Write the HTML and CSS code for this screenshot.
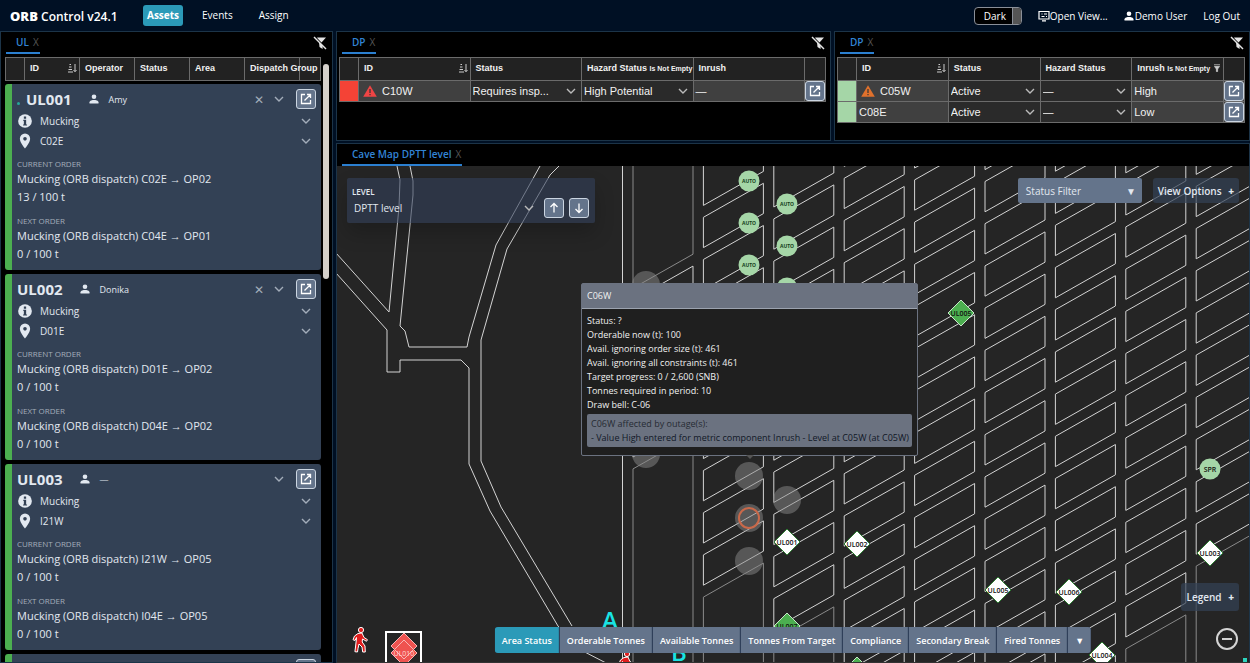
FILE: index.html
```html
<!DOCTYPE html>
<html lang="en">
<head>
    <meta charset="UTF-8">
    <meta name="viewport" content="width=device-width, initial-scale=1.0">
    <title>ORB Control</title>
    <link rel="stylesheet" href="styles.css">
</head>
<body>
    <!-- Icon sprite -->
    <svg class="sprite" aria-hidden="true">
        <symbol id="i-chevron" viewBox="0 0 10 10"><path d="M1 3l4 4 4-4" fill="none" stroke="currentColor" stroke-width="1.4"/></symbol>
        <symbol id="i-open" viewBox="0 0 12 12"><path d="M5 1.5H1.5v9h9V7M7 1.5h3.500V5M10.300 1.700L4.500 7.500" fill="none" stroke="currentColor" stroke-width="1.300"/></symbol>
        <symbol id="i-user" viewBox="0 0 10 10"><circle cx="5" cy="2.700" r="2.300" fill="currentColor"/><path d="M.5 9.500V8.300C.5 6.600 3.500 6 5 6s4.500.6 4.500 2.300v1.200z" fill="currentColor"/></symbol>
        <symbol id="i-info" viewBox="0 0 14 14"><circle cx="7" cy="7" r="6" fill="currentColor"/><path d="M6 3h2v2H6zM5.500 6H8v4h.8v1H5.300v-1H6V7h-.5z" fill="#334155"/></symbol>
        <symbol id="i-pin" viewBox="0 0 14 14"><path fill-rule="evenodd" d="M7 .5a4.500 4.500 0 0 0-4.500 4.500C2.500 8.500 7 13.500 7 13.500S11.500 8.500 11.500 5A4.500 4.500 0 0 0 7 .5zm0 3a1.600 1.600 0 1 1 0 3.200 1.600 1.600 0 0 1 0-3.200z" fill="currentColor"/></symbol>
        <symbol id="i-nofilter" viewBox="0 0 14 14"><path d="M4 1.500h9L8.500 6.600 4.800 2.700zM6 6l3.600 3.600V13L6.500 11z" fill="currentColor"/><path d="M1 1l12 12" stroke="currentColor" stroke-width="1.400"/></symbol>
        <symbol id="i-sort" viewBox="0 0 10 10"><path d="M1 9h5M1.500 6.500h3.500M2 4h2.500M2.500 1.500h1.500M8 1v7.500M6.500 7L8 8.700 9.500 7" fill="none" stroke="currentColor"/></symbol>
        <symbol id="i-warn" viewBox="0 0 14 12"><path d="M7 .3l6.800 11.500H.2z" fill="currentColor"/><path d="M6.400 4h1.200v4H6.400zM6.400 9h1.200v1.300H6.400z" fill="#333"/></symbol>
        <symbol id="i-arrow" viewBox="0 0 12 12"><path d="M6 10.500v-9M2.500 5L6 1.500 9.500 5" fill="none" stroke="currentColor" stroke-width="1.300"/></symbol>
        <symbol id="i-view" viewBox="0 0 12 12"><path d="M1 1.500h10v7.500H1zM3.500 4h1M6 4h3M3.500 6.500h3M8 6.500h1M4 10.800h4" fill="none" stroke="currentColor" stroke-width="1.200"/></symbol>
        <symbol id="i-filter" viewBox="0 0 8 8"><path d="M1 .8h6M1.500 2.500h5L4.600 5v2.500h-1.200V5z" fill="currentColor" stroke="currentColor" stroke-width=".8"/></symbol>
        <symbol id="i-walk" viewBox="0 0 16 26"><circle cx="9" cy="3" r="2.600"/><path d="M6 6.500l4-.5 2 4.500 3.500 2.200-1 1.600L10.500 12l-.3 3 2.800 4 .3 6h-2.600l-.7-5L7 17l-1 4.500-.5 3.500-2.600-.3L3.500 20l.7-6 .3-3.500-1.500 3-2-.8L2.500 9z"/></symbol>
    </svg>

    <header class="topbar">
        <h1 class="brand"><b>ORB</b> Control v24.1</h1>
        <nav class="nav">
            <a class="active" href="#assets">Assets</a>
            <a href="#events">Events</a>
            <a href="#assign">Assign</a>
        </nav>
        <div class="user-menu">
            <button class="theme">Dark<span class="knob"></span></button>
            <a href="#views"><svg width="12" height="12"><use href="#i-view"/></svg>Open View...</a>
            <a href="#user"><svg class="avatar" width="10" height="10"><use href="#i-user"/></svg>Demo User</a>
            <a href="#logout">Log Out</a>
        </div>
    </header>

    <main class="workspace">
        <!-- Loader list -->
        <section class="panel panel-ul">
            <div class="tabs">
                <div class="tab"><a href="#ul">UL</a><button aria-label="Close UL">X</button></div>
                <button class="clear" aria-label="Clear filters"><svg width="14" height="14"><use href="#i-nofilter"/></svg></button>
            </div>
            <div class="ul-body">
                <div class="ul-list">
                    <table class="grid">
                        <colgroup><col class="c-mark"><col><col><col><col><col><col class="c-open"></colgroup>
                        <thead>
                            <tr>
                                <th></th>
                                <th><span class="head">ID<svg width="10" height="10"><use href="#i-sort"/></svg></span></th>
                                <th>Operator</th>
                                <th>Status</th>
                                <th>Area</th>
                                <th>Dispatch Group</th>
                                <th></th>
                            </tr>
                        </thead>
                    </table>
                    <div class="cards" id="cards"></div>
                </div>
                <div class="scroll"><div class="thumb"></div></div>
            </div>
        </section>

        <!-- Draw points by hazard -->
        <section class="panel">
            <div class="tabs">
                <div class="tab"><a href="#dp-hazard">DP</a><button aria-label="Close DP">X</button></div>
                <button class="clear" aria-label="Clear filters"><svg width="14" height="14"><use href="#i-nofilter"/></svg></button>
            </div>
            <div class="table-wrap">
                <table class="grid">
                    <colgroup><col class="c-mark"><col><col><col><col><col class="c-open"></colgroup>
                    <thead>
                        <tr>
                            <th></th>
                            <th><span class="head">ID<svg width="10" height="10"><use href="#i-sort"/></svg></span></th>
                            <th>Status</th>
                            <th>Hazard Status <small>Is Not Empty</small></th>
                            <th>Inrush</th>
                            <th></th>
                        </tr>
                    </thead>
                    <tbody>
                        <tr>
                            <td class="red"></td>
                            <td><span class="id"><svg class="warn-red" width="14" height="12"><use href="#i-warn"/></svg>C10W</span></td>
                            <td class="edit"><span class="select"><select aria-label="Status"><option>Requires insp...</option></select><svg width="10" height="10"><use href="#i-chevron"/></svg></span></td>
                            <td class="edit"><span class="select"><select aria-label="Hazard status"><option>High Potential</option></select><svg width="10" height="10"><use href="#i-chevron"/></svg></span></td>
                            <td>—</td>
                            <td class="act"><button class="open" aria-label="Open C10W"><svg width="12" height="12"><use href="#i-open"/></svg></button></td>
                        </tr>
                    </tbody>
                </table>
            </div>
        </section>

        <!-- Draw points by inrush -->
        <section class="panel">
            <div class="tabs">
                <div class="tab"><a href="#dp-inrush">DP</a><button aria-label="Close DP">X</button></div>
                <button class="clear" aria-label="Clear filters"><svg width="14" height="14"><use href="#i-nofilter"/></svg></button>
            </div>
            <div class="table-wrap">
                <table class="grid">
                    <colgroup><col class="c-mark"><col><col><col><col><col class="c-open"></colgroup>
                    <thead>
                        <tr>
                            <th></th>
                            <th><span class="head">ID<svg width="10" height="10"><use href="#i-sort"/></svg></span></th>
                            <th>Status</th>
                            <th>Hazard Status</th>
                            <th><span class="head"><span>Inrush <small>Is Not Empty</small></span><svg width="8" height="8"><use href="#i-filter"/></svg></span></th>
                            <th></th>
                        </tr>
                    </thead>
                    <tbody>
                        <tr>
                            <td class="green"></td>
                            <td><span class="id"><svg class="warn-orange" width="14" height="12"><use href="#i-warn"/></svg>C05W</span></td>
                            <td class="edit"><span class="select"><select aria-label="Status"><option>Active</option></select><svg width="10" height="10"><use href="#i-chevron"/></svg></span></td>
                            <td class="edit"><span class="select"><select aria-label="Hazard status"><option>—</option></select><svg width="10" height="10"><use href="#i-chevron"/></svg></span></td>
                            <td>High</td>
                            <td class="act"><button class="open" aria-label="Open C05W"><svg width="12" height="12"><use href="#i-open"/></svg></button></td>
                        </tr>
                        <tr>
                            <td class="green"></td>
                            <td>C08E</td>
                            <td class="edit"><span class="select"><select aria-label="Status"><option>Active</option></select><svg width="10" height="10"><use href="#i-chevron"/></svg></span></td>
                            <td class="edit"><span class="select"><select aria-label="Hazard status"><option>—</option></select><svg width="10" height="10"><use href="#i-chevron"/></svg></span></td>
                            <td>Low</td>
                            <td class="act"><button class="open" aria-label="Open C08E"><svg width="12" height="12"><use href="#i-open"/></svg></button></td>
                        </tr>
                    </tbody>
                </table>
            </div>
        </section>

        <!-- Cave map -->
        <section class="panel panel-map">
            <div class="tabs">
                <div class="tab"><a href="#map">Cave Map DPTT level</a><button aria-label="Close map">X</button></div>
            </div>
            <div class="map">
                <svg class="drawing" role="img" aria-label="DPTT level">
                    <g class="tunnel">
                        <path d="M60 0l3 14-1 27-10 105L-1 87"/>
                        <path d="M73 0l3 15v14L63 160l5 5 4 16h58l2-10 27-92L203 0"/>
                        <path d="M-1 107l51 57v42h13v-12h61l8 8v96l21 47 68 115 19 22 31 16"/>
                        <path d="M222 0l-9 9-43 74-26 91v121l20 46 71 119"/>
                        <path d="M285.500 0v500"/>
                    </g>
                    <g id="pillars"></g>
                    <g id="markers"></g>
                    <use class="walker" href="#i-walk" x="15" y="461" width="16" height="26"/>
                    <use class="walker" href="#i-walk" x="281" y="485" width="16" height="26"/>
                    <text class="zone" x="273" y="463">A</text>
                    <text class="zone" x="342" y="495">B</text>
                    <g class="parked">
                        <path class="frame" d="M49 500v-34h35v34"/>
                        <path d="M67 467l13 13-13 13-13-13zM67 474l13 13-13 13-13-13z"/>
                        <text x="67" y="490">UL010</text>
                    </g>
                    <rect x="906" y="492" width="4" height="4" fill="#2dd4bf"/>
                </svg>

                <div class="level">
                    <label for="level">LEVEL</label>
                    <div class="level-row">
                        <span class="select"><select id="level"><option>DPTT level</option></select><svg width="10" height="10"><use href="#i-chevron"/></svg></span>
                        <button class="open" aria-label="Level up"><svg width="12" height="12"><use href="#i-arrow"/></svg></button>
                        <button class="open down" aria-label="Level down"><svg width="12" height="12"><use href="#i-arrow"/></svg></button>
                    </div>
                </div>

                <div class="map-options">
                    <button class="status-filter">Status Filter <span>▼</span></button>
                    <button class="ghost">View Options <b>+</b></button>
                </div>

                <div class="tooltip">
                    <h2>C06W</h2>
                    <div class="tooltip-body">
                        <p>Status: ?</p>
                        <p>Orderable now (t): 100</p>
                        <p>Avail. ignoring order size (t): 461</p>
                        <p>Avail. ignoring all constraints (t): 461</p>
                        <p>Target progress: 0 / 2,600 (SNB)</p>
                        <p>Tonnes required in period: 10</p>
                        <p>Draw bell: C-06</p>
                        <div class="outage">
                            <p>C06W affected by outage(s):</p>
                            <p class="cause">- Value High entered for metric component Inrush - Level at C05W (at C05W)</p>
                        </div>
                    </div>
                </div>

                <div class="layers">
                    <button class="active">Area Status</button>
                    <button>Orderable Tonnes</button>
                    <button>Available Tonnes</button>
                    <button>Tonnes From Target</button>
                    <button>Compliance</button>
                    <button>Secondary Break</button>
                    <button>Fired Tonnes</button>
                    <button aria-label="More layers">▼</button>
                </div>

                <div class="corner">
                    <button class="ghost legend">Legend <b>+</b></button>
                    <button class="zoom-out" aria-label="Zoom out"><svg width="24" height="24"><circle cx="12" cy="12" r="10"/><path d="M7 12h10"/></svg></button>
                </div>
            </div>
        </section>
    </main>

    <script src="app.js"></script>
</body>
</html>
```

FILE: styles.css
```css
* {
    box-sizing: border-box;
}
body {
    margin: 0;
    height: 100vh;
    display: flex;
    flex-direction: column;
    overflow: hidden;
    background: #001024;
    color: #e2e8f0;
    font-family: "Open Sans", "Noto Sans", sans-serif;
    font-size: 10px;
}
h1, h2, p {
    margin: 0;
}
a {
    color: inherit;
    text-decoration: none;
}
button, select {
    font: inherit;
    color: inherit;
    border: none;
    background: none;
    padding: 0;
    margin: 0;
    cursor: pointer;
}
svg {
    flex: none;
    display: block;
}
.sprite {
    position: absolute;
    width: 0;
    height: 0;
}

/* Top bar */
.topbar {
    height: 31px;
    flex: none;
    display: flex;
    align-items: center;
    padding: 0 10px;
    color: #fff;
}
.brand {
    width: 133px;
    font-size: 12px;
    font-weight: 600;
}
.brand b {
    font-size: 13px;
    font-weight: 800;
}
.nav {
    display: flex;
    gap: 12px;
}
.nav a {
    padding: 0 7px;
    line-height: 21px;
    border-radius: 3px;
}
.nav .active {
    padding: 0 4px;
    background: #2b9ab8;
    font-weight: 700;
}
.user-menu {
    margin-left: auto;
    display: flex;
    align-items: center;
    gap: 16px;
}
.user-menu a {
    display: flex;
    align-items: center;
}
.avatar {
    margin-right: 1px;
}
.theme {
    display: flex;
    align-items: stretch;
    height: 18px;
    width: 48px;
    padding-left: 9px;
    line-height: 16px;
    border: 1px solid #8a8f98;
    border-radius: 4px;
    background: #000;
    overflow: hidden;
}
.knob {
    width: 9px;
    margin-left: auto;
    background: #555;
    border-left: 1px solid #8a8f98;
}

/* Panels */
.workspace {
    flex: 1;
    min-height: 0;
    display: grid;
    grid-template-columns: 333fr 495fr 416fr;
    grid-template-rows: 110px 1fr;
    gap: 2px 3px;
}
.panel {
    min-width: 0;
    min-height: 0;
    display: flex;
    flex-direction: column;
    background: #000;
    border: 1px solid #1c3448;
}
.panel-ul {
    grid-row: 1 / 3;
}
.panel-map {
    grid-column: 2 / 4;
    border-bottom-color: #333;
}
.tabs {
    height: 22px;
    flex: none;
    display: flex;
    justify-content: space-between;
    padding: 0 5px;
}
.tab {
    display: flex;
    align-items: center;
    gap: 4px;
    padding: 0 1px 0 10px;
    color: #3284d6;
    font-weight: 600;
    border-bottom: 2px solid #2b7fd0;
}
.tab button {
    color: #555;
    font-weight: 400;
}
.clear {
    color: #e5e5e5;
}
.table-wrap {
    padding: 3px 4px 0 2px;
}

/* Data tables */
.grid {
    width: 100%;
    table-layout: fixed;
    border-collapse: collapse;
    font-family: "Liberation Sans", Arial, sans-serif;
    color: #f1f1f1;
}
.grid th, .grid td {
    border: 1px solid #6b6b6b;
    padding: 0 2px;
    text-align: left;
    white-space: nowrap;
}
.grid th {
    height: 23px;
    padding: 0 2px 3px 5px;
    background: #222;
    font-size: 9px;
    font-weight: 700;
}
.grid th small {
    font-size: 7px;
}
.grid td {
    height: 21px;
    background: #404040;
    font-size: 11px;
}
.grid .edit {
    background: #2a2a2a;
}
.grid .red {
    background: #f44336;
}
.grid .green {
    background: #a5d6a7;
}
.grid .act {
    padding: 0;
}
.c-mark {
    width: 19px;
}
.c-open {
    width: 21px;
}
.head {
    display: flex;
    align-items: center;
    justify-content: space-between;
}
.head svg {
    color: #ccc;
}
.id {
    display: flex;
    align-items: center;
    gap: 5px;
    padding-left: 2px;
}
.warn-red {
    color: #ef4444;
}
.warn-orange {
    color: #e0712c;
}
.select {
    display: grid;
    align-items: center;
}
.select > * {
    grid-area: 1 / 1;
}
.select select {
    appearance: none;
    width: 100%;
}
.select svg {
    justify-self: end;
    margin-right: 3px;
    color: #bbb;
    pointer-events: none;
}
.open {
    width: 20px;
    height: 20px;
    display: flex;
    align-items: center;
    justify-content: center;
    background: #64748b;
    border: 1px solid #cbd5e1;
    border-radius: 3px;
    color: #fff;
}
.down svg {
    transform: rotate(180deg);
}

/* Loader cards */
.ul-body {
    flex: 1;
    min-height: 0;
    display: flex;
    gap: 2px;
    padding: 3px 3px 0 4px;
}
.ul-list {
    flex: 1;
    min-width: 0;
    display: flex;
    flex-direction: column;
    overflow: hidden;
}
.scroll {
    width: 6px;
    padding-top: 7px;
}
.thumb {
    height: 215px;
    border-radius: 3px;
    background: #d4d0cb;
}
.cards {
    display: flex;
    flex-direction: column;
    gap: 4px;
    padding-top: 3px;
}
.card {
    flex: none;
    padding: 5px 5px 7px;
    background: #334155;
    border-left: 7px solid #4caf50;
    border-radius: 3px;
}
.card-head, .card-row {
    height: 20px;
    display: flex;
    align-items: center;
}
.card-head {
    margin-bottom: 2px;
    gap: 10px;
}
.card-head h2 {
    margin-right: 7px;
    font-size: 15px;
    font-weight: 700;
}
.card-head h2 i {
    display: inline-block;
    width: 3px;
    height: 3px;
    margin-right: 6px;
    border-radius: 2px;
    background: #26a69a;
}
.card-head .operator {
    flex: 1;
    font-size: 9px;
}
.card-head .release {
    font-size: 12px;
    color: #a3adba;
}
.chev {
    color: #a3adba;
}
.card-head .chev {
    margin-right: 2px;
}
.card-row span {
    flex: 1;
    margin-left: 7px;
}
.card-row .chev {
    margin-right: 5px;
}
.order {
    margin-top: 6px;
    font-size: 11px;
    line-height: 18px;
}
.order + .order {
    margin-top: 8px;
}
.order h3 {
    margin: 0;
    font-size: 8px;
    font-weight: 400;
    line-height: 13px;
    color: #a3adba;
}

/* Map */
.map {
    position: relative;
    flex: 1;
    min-height: 0;
    overflow: hidden;
    background: #252525;
}
.drawing {
    width: 100%;
    height: 100%;
}
.tunnel path, .pillar {
    fill: none;
    stroke: #d4d4d4;
    stroke-width: 1px;
}
.pillar.block {
    stroke: #8a8a8a;
}
.drawing text {
    text-anchor: middle;
}
.auto {
    fill: #a5d6a7;
}
.auto-text {
    font-size: 5px;
    font-weight: 700;
    fill: #14401a;
}
.idle {
    fill: #8a8a8a;
    fill-opacity: .5;
}
.target {
    fill: none;
    stroke: #c9694a;
    stroke-width: 2px;
}
.unit {
    fill: #fff;
    stroke: #2e7d32;
}
.unit.busy {
    fill: #4caf50;
    stroke: #c8e6c9;
}
.unit-text {
    font-size: 7px;
    font-weight: 600;
    fill: #111;
}
.walker {
    fill: #e11d1d;
    stroke: #fff;
    stroke-width: 1px;
}
.zone {
    font-size: 24px;
    font-weight: 600;
    fill: #19e3e3;
}
.parked path {
    fill: #ef5350;
    stroke: #f8b4b4;
}
.parked .frame {
    fill: none;
    stroke: #fff;
    stroke-width: 2px;
}
.parked text {
    font-size: 7px;
    fill: #ffd5d5;
}
.level {
    position: absolute;
    left: 10px;
    top: 12px;
    width: 248px;
    padding: 7px 6px 5px 5px;
    background: rgba(51, 65, 92, .6);
    border-radius: 2px;
    box-shadow: 0 10px 20px rgba(0, 0, 0, .2);
}
.level label {
    display: block;
    font-size: 8px;
    font-weight: 600;
    line-height: 13px;
}
.level-row {
    display: flex;
    gap: 5px;
}
.level-row .select {
    flex: 1;
    padding-left: 2px;
}
.level-row .select svg {
    margin-right: 5px;
}
.map-options {
    position: absolute;
    right: 10px;
    top: 12px;
    display: flex;
    gap: 11px;
}
.map-options button {
    height: 25px;
}
.status-filter {
    width: 124px;
    display: flex;
    justify-content: space-between;
    align-items: center;
    padding: 0 6px 0 8px;
    background: #64748b;
    border-radius: 2px;
}
.ghost {
    padding: 0 5px;
    background: rgba(51, 65, 85, .7);
    border-radius: 3px;
    font-weight: 600;
}
.ghost b {
    margin-left: 4px;
}
.tooltip {
    position: absolute;
    left: 244px;
    top: 117px;
    width: 337px;
    background: #1f1f1f;
    border: 1px solid #6b7280;
    border-radius: 2px;
    color: #f1f1f1;
    font-size: 9px;
    line-height: 14px;
}
.tooltip::after {
    content: "";
    position: absolute;
    left: 50%;
    top: 100%;
    margin-left: -4px;
    border: 4px solid transparent;
    border-top-color: #555;
    border-bottom: none;
}
.tooltip h2 {
    padding: 0 5px;
    font-size: 9px;
    font-weight: 400;
    line-height: 24px;
    background: #6b7280;
    border-bottom: 1px solid #9ca3af;
}
.tooltip-body {
    padding: 5px 5px 8px;
}
.outage {
    margin-top: 2px;
    padding: 3px 4px 2px;
    background: #6b7280;
    border-radius: 2px;
    color: #262b33;
}
.cause {
    color: #111827;
    white-space: nowrap;
}
.layers {
    position: absolute;
    left: 50%;
    bottom: 9px;
    transform: translateX(-50%);
    display: flex;
    gap: 1px;
    background: #253650;
    border-radius: 3px;
    overflow: hidden;
}
.layers button {
    height: 26px;
    padding: 0 7px;
    background: #64748b;
    color: #fff;
    font-size: 9px;
    font-weight: 600;
    white-space: nowrap;
}
.layers .active {
    background: #2b9ab8;
}
.corner {
    position: absolute;
    right: 10px;
    bottom: 11px;
    display: flex;
    flex-direction: column;
    align-items: flex-end;
    gap: 16px;
}
.legend {
    height: 28px;
}
.zoom-out svg {
    fill: none;
    stroke: #d4d4d4;
    stroke-width: 2px;
}
```

FILE: app.js
```js
const loaders = [
    { id: "UL001", operator: "Amy", area: "C02E", online: true, orders: [["C02E → OP02", "13 / 100 t"], ["C04E → OP01", "0 / 100 t"]] },
    { id: "UL002", operator: "Donika", area: "D01E", orders: [["D01E → OP02", "0 / 100 t"], ["D04E → OP02", "0 / 100 t"]] },
    { id: "UL003", operator: "", area: "I21W", orders: [["I21W → OP05", "0 / 100 t"], ["I04E → OP05", "0 / 100 t"]] }
];

function icon(name, size, cls) {
    return `<svg class="${cls || ""}" width="${size}" height="${size}"><use href="#i-${name}"/></svg>`;
}

// Loader cards
function loadCards() {
    let html = "";
    loaders.forEach(loader => {
        html += `<article class="card">
            <div class="card-head">
                <h2>${loader.online ? "<i></i>" : ""}${loader.id}</h2>
                ${icon("user", 10)}
                <span class="operator">${loader.operator || "—"}</span>
                ${loader.operator ? `<button class="release" aria-label="Release">✕</button>` : ""}
                ${icon("chevron", 10, "chev")}
                <button class="open" aria-label="Open ${loader.id}">${icon("open", 12)}</button>
            </div>
            <div class="card-row">${icon("info", 16)}<span>Mucking</span>${icon("chevron", 10, "chev")}</div>
            <div class="card-row">${icon("pin", 16)}<span>${loader.area}</span>${icon("chevron", 10, "chev")}</div>`;
        loader.orders.forEach((order, index) => {
            html += `<div class="order">
                <h3>${index === 0 ? "CURRENT ORDER" : "NEXT ORDER"}</h3>
                <p>Mucking (ORB dispatch) ${order[0]}</p>
                <p>${order[1]}</p>
            </div>`;
        });
        html += `</article>`;
    });
    html += `<article class="card"><div class="card-head"><span class="operator"></span><button class="open" aria-label="Open">${icon("open", 12)}</button></div></article>`;
    document.getElementById("cards").innerHTML = html;
}

// Rows of pillars between the drives. from/to: first and last regular pillar,
// beyond them the column is one solid block.
const columns = [
    { from: 2, to: 5 },
    { from: 0, to: 8 },
    { from: 0, to: 9 },
    { from: -2, to: 12 },
    { from: -2, to: 12 },
    { from: -2, to: 12 },
    { from: -2, to: 12 },
    { from: -2, to: 9 },
    { from: -2, to: 7 }
];

function drawPillars() {
    const pitchX = 70.4, pitchY = 42.2, width = 60, rise = 34, height = 30.3;
    let html = "";
    columns.forEach((col, c) => {
        const x = 296 + c * pitchX;
        const top = n => 49.7 + c * 1.6 + n * pitchY;
        for (let n = col.from; n <= col.to; n++) {
            const y = top(n);
            html += `<path class="pillar" d="M${x} ${y}l${width} ${-rise}v${height}l${-width} ${rise}z"/>`;
        }
        if (col.from >= 0) {
            const y = top(col.from - 1) + height;
            html += `<path class="pillar${c === 0 ? " block" : ""}" d="M${x} -40V${y}l${width} ${-rise}V-40"/>`;
        }
        const y = top(col.to + 1);
        html += `<path class="pillar block" d="M${x} 540V${y}l${width} ${-rise}V540"/>`;
    });
    document.getElementById("pillars").innerHTML = html;
}

function drawMarkers() {
    const autos = [[412, 15], [412, 57], [412, 99], [450, 38], [450, 80], [450, 122]];
    const idle = [[309, 119], [309, 288], [412, 310], [450, 334], [412, 352], [412, 395]];
    const units = [
        ["UL001", 450, 376], ["UL002", 520, 378], ["UL005", 661, 424], ["UL006", 732, 426],
        ["UL003", 873, 387], ["UL004", 765, 489],
        ["UL005", 624, 147, true], ["UL007", 450, 460, true], ["UL008", 520, 504, true]
    ];
    let html = "";
    idle.forEach(([x, y]) => html += `<circle class="idle" cx="${x}" cy="${y}" r="14"/>`);
    html += `<circle class="target" cx="412" cy="352" r="10"/>`;
    autos.forEach(([x, y]) => {
        html += `<circle class="auto" cx="${x}" cy="${y}" r="10.5"/><text class="auto-text" x="${x}" y="${y + 2}">AUTO</text>`;
    });
    html += `<circle class="auto" cx="873" cy="303" r="10.5"/><text class="unit-text" x="873" y="306">SPR</text>`;
    units.forEach(([id, x, y, busy]) => {
        html += `<path class="unit${busy ? " busy" : ""}" d="M${x} ${y - 13}l13 13-13 13-13-13z"/><text class="unit-text" x="${x}" y="${y + 3}">${id}</text>`;
    });
    document.getElementById("markers").innerHTML = html;
}

loadCards();
drawPillars();
drawMarkers();
```
